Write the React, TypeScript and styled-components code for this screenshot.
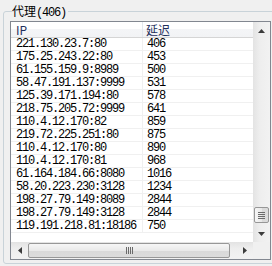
import styled, { createGlobalStyle } from 'styled-components';

const proxies: [string, number][] = [
  ['221.130.23.7:80', 406],
  ['175.25.243.22:80', 453],
  ['61.155.159.9:8989', 500],
  ['58.47.191.137:9999', 531],
  ['125.39.171.194:80', 578],
  ['218.75.205.72:9999', 641],
  ['110.4.12.170:82', 859],
  ['219.72.225.251:80', 875],
  ['110.4.12.170:80', 890],
  ['110.4.12.170:81', 968],
  ['61.164.184.66:8080', 1016],
  ['58.20.223.230:3128', 1234],
  ['198.27.79.149:8089', 2844],
  ['198.27.79.149:3128', 2844],
  ['119.191.218.81:18186', 750],
];

const GlobalStyle = createGlobalStyle`
  html, body {
    margin: 0;
    padding: 0;
    background: #f0f0f0;
    overflow: hidden;
  }
`;

const App = () => {
  return (
    <>
      <GlobalStyle />
      <GroupBox>
        <Legend>
          <Cjk>代理</Cjk>
          <Mono>(406)</Mono>
        </Legend>
        <ListView>
          <Viewport>
            <HeaderRow>
              <HeaderCell $pad={5}>IP</HeaderCell>
              <HeaderCell $pad={3}>延迟</HeaderCell>
            </HeaderRow>
            {proxies.map(([ip, delay], i) => (
              <Row key={i}>
                <Cell $pad={5}>{ip}</Cell>
                <Cell $pad={4}>{delay}</Cell>
              </Row>
            ))}
          </Viewport>

          <VScroll>
            <ArrowButton>
              <svg width="7" height="4" viewBox="0 0 7 4">
                <polygon points="0,4 3.5,0 7,4" fill="#3c3c3c" />
              </svg>
            </ArrowButton>
            <VTrack>
              <VThumb $offset={168}>
                <svg width="7" height="7" viewBox="0 0 7 7">
                  <path d="M0 0.5h7M0 2.5h7M0 4.5h7M0 6.5h7" stroke="#6a6a6a" strokeWidth="1" />
                </svg>
              </VThumb>
            </VTrack>
            <ArrowButton>
              <svg width="7" height="4" viewBox="0 0 7 4">
                <polygon points="0,0 7,0 3.5,4" fill="#3c3c3c" />
              </svg>
            </ArrowButton>
          </VScroll>

          <HScroll>
            <ArrowButton>
              <svg width="4" height="7" viewBox="0 0 4 7">
                <polygon points="4,0 4,7 0,3.5" fill="#3c3c3c" />
              </svg>
            </ArrowButton>
            <HTrack>
              <HThumb $size={202}>
                <svg width="7" height="7" viewBox="0 0 7 7">
                  <path d="M0.5 0v7M2.5 0v7M4.5 0v7M6.5 0v7" stroke="#6a6a6a" strokeWidth="1" />
                </svg>
              </HThumb>
            </HTrack>
            <ArrowButton>
              <svg width="4" height="7" viewBox="0 0 4 7">
                <polygon points="0,0 4,3.5 0,7" fill="#3c3c3c" />
              </svg>
            </ArrowButton>
          </HScroll>

          <Corner />
        </ListView>
      </GroupBox>
    </>
  );
};

const GroupBox = styled.fieldset`
  box-sizing: border-box;
  margin: 4px 0 0 3px;
  width: 280px;
  padding: 3px 0 3px 6px;
  border: 1px solid #c9d3d9;
  border-radius: 3px;
`;

const Legend = styled.legend`
  margin-left: 2px;
  padding: 0 2px 0 0;
  height: 14px;
  line-height: 14px;
  font-size: 12px;
  color: #000;
  white-space: nowrap;
`;

const Cjk = styled.span`
  font-family: 'Noto Sans CJK SC', sans-serif;
  font-size: 12px;
`;

const Mono = styled.span`
  font-family: 'Liberation Mono', monospace;
  font-size: 12px;
  letter-spacing: -1.2px;
`;

const ListView = styled.div`
  box-sizing: border-box;
  width: 261px;
  height: 239px;
  border: 1px solid #828790;
  background: #fff;
  display: grid;
  grid-template-columns: 242px 17px;
  grid-template-rows: 220px 17px;
`;

const Viewport = styled.div`
  overflow: hidden;
`;

const HeaderRow = styled.div`
  display: grid;
  grid-template-columns: 132px 200px;
  height: 16px;
  box-sizing: border-box;
  border-bottom: 1px solid #d5d5d5;
  background: linear-gradient(#ffffff, #ffffff 45%, #f4f5f7 50%, #f2f3f5);
`;

const HeaderCell = styled.div<{ $pad: number }>`
  padding-left: ${(p) => p.$pad}px;
  border-right: 1px solid #e3e8ee;
  font-family: 'Noto Sans CJK SC', 'Liberation Mono', sans-serif;
  font-size: 12px;
  line-height: 15px;
  color: #1e2f5c;
  white-space: nowrap;
`;

const Row = styled.div`
  display: grid;
  grid-template-columns: 132px 200px;
  height: 13px;
  box-sizing: border-box;
  border-bottom: 1px solid #f0f0f0;
`;

const Cell = styled.div<{ $pad: number }>`
  padding-left: ${(p) => p.$pad}px;
  border-right: 1px solid #f0f0f0;
  font-family: 'Liberation Mono', monospace;
  font-size: 12px;
  letter-spacing: -1.2px;
  line-height: 12px;
  color: #000;
  white-space: nowrap;
`;

const VScroll = styled.div`
  display: flex;
  flex-direction: column;
  background: linear-gradient(to right, #e3e3e3, #eeeeee 40%, #f2f2f2);
`;

const HScroll = styled.div`
  display: flex;
  background: linear-gradient(#e3e3e3, #eeeeee 40%, #f2f2f2);
`;

const ArrowButton = styled.div`
  flex: none;
  width: 17px;
  height: 17px;
  display: flex;
  align-items: center;
  justify-content: center;
`;

const VTrack = styled.div`
  flex: 1;
  display: flex;
  flex-direction: column;
`;

const VThumb = styled.div<{ $offset: number }>`
  box-sizing: border-box;
  margin: ${(p) => p.$offset}px 1px 0 1px;
  height: 16px;
  border: 1px solid #979797;
  border-radius: 2px;
  background: linear-gradient(to right, #f6f6f6, #e9e9e9 50%, #d9d9d9 51%, #dcdcdc);
  display: flex;
  align-items: center;
  justify-content: center;
`;

const HTrack = styled.div`
  flex: 1;
  display: flex;
`;

const HThumb = styled.div<{ $size: number }>`
  box-sizing: border-box;
  margin: 1px 0;
  width: ${(p) => p.$size}px;
  border: 1px solid #979797;
  border-radius: 2px;
  background: linear-gradient(#f6f6f6, #e9e9e9 50%, #d9d9d9 51%, #dcdcdc);
  display: flex;
  align-items: center;
  justify-content: center;
`;

const Corner = styled.div`
  background: #f0f0f0;
`;

export default App;
